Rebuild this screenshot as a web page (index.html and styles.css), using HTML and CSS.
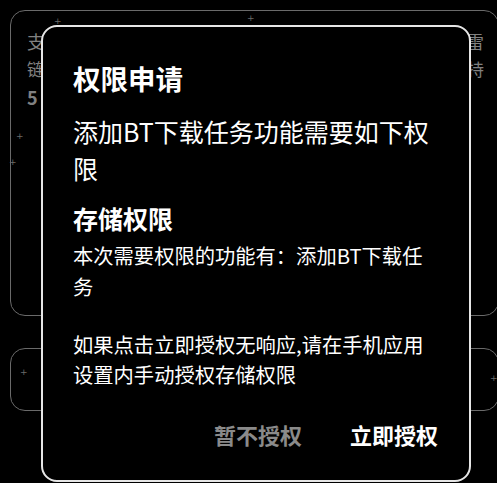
FILE: index.html
```html
<!DOCTYPE html>
<html lang="zh-CN">
<head>
<meta charset="utf-8">
<title>权限申请</title>
<link rel="stylesheet" href="styles.css">
</head>
<body>
<div class="page">
  <div class="card card-main">
    <div class="row row-1"><span>支</span><span>雷</span></div>
    <div class="row row-2"><span>链</span><span>持</span></div>
    <div class="row row-3"><span class="num">5</span></div>
  </div>
  <div class="card card-second"></div>

  <span class="spark s1">+</span>
  <span class="spark s2">+</span>
  <span class="spark s3">+</span>
  <span class="spark s4">+</span>
  <span class="spark s5">+</span>
  <span class="spark s6">+</span>
</div>

<div class="dialog">
  <h1 class="title">权限申请</h1>
  <p class="lead">添加BT下载任务功能需要如下权限</p>
  <h2 class="perm-name">存储权限</h2>
  <p class="perm-desc">本次需要权限的功能有：添加BT下载任务</p>
  <p class="hint">如果点击立即授权无响应,请在手机应用设置内手动授权存储权限</p>
  <div class="actions">
    <span class="btn btn-deny">暂不授权</span>
    <span class="btn btn-grant">立即授权</span>
  </div>
</div>
</body>
</html>
```

FILE: styles.css
```css
html, body {
  margin: 0;
  padding: 0;
  background: #000;
  width: 497px;
  height: 483px;
  overflow: hidden;
  font-family: "Noto Sans CJK SC", "Noto Sans", sans-serif;
}

.page {
  position: relative;
  padding: 10px 0 0 10px;
  width: 487px;
  height: 473px;
}

.card {
  box-sizing: border-box;
  width: 489px;
  border: 1.5px solid #6a6a6a;
  border-radius: 15px;
}

.card-main {
  height: 306px;
  padding: 16px 14px 0 16px;
  color: #808080;
}

.row {
  display: flex;
  justify-content: space-between;
  font-size: 18px;
  line-height: 28px;
}

.row-2 {
  font-size: 17px;
}

.num {
  font-weight: 700;
}

.card-second {
  margin-top: 32px;
  height: 63px;
}

.spark {
  position: absolute;
  color: #6a6a6a;
  font-size: 9px;
  line-height: 9px;
  font-family: "DejaVu Sans", sans-serif;
}
.s1 { left: 54px; top: 17px; }
.s2 { left: 16px; top: 132px; }
.s3 { left: 9px; top: 158px; }
.s4 { left: 20px; top: 368px; }
.s5 { left: 490px; top: 374px; }
.s6 { left: 247px; top: 14px; }

.dialog {
  position: absolute;
  left: 41px;
  top: 25px;
  box-sizing: border-box;
  width: 430px;
  height: 457px;
  background: #000;
  border: 2px solid #e6e6e6;
  border-radius: 16px;
  padding: 31px 31px 0 30px;
  color: #fff;
}

.title {
  margin: 0;
  font-size: 27.5px;
  line-height: 40px;
  font-weight: 700;
}

.lead {
  margin: 15px 0 0;
  font-size: 25px;
  line-height: 37px;
}

.perm-name {
  margin: 14px 0 0;
  font-size: 25px;
  line-height: 34px;
  font-weight: 700;
}

.perm-desc {
  margin: 5px 0 0;
  font-size: 20.3px;
  line-height: 31px;
}

.hint {
  margin: 27px 0 0;
  font-size: 20.3px;
  line-height: 30px;
}

.actions {
  margin-top: 30px;
  display: flex;
  justify-content: flex-end;
  gap: 48px;
  padding-right: 0;
}

.btn {
  font-size: 22px;
  line-height: 30px;
  font-weight: 700;
}

.btn-deny {
  color: #8a8a8a;
}

.btn-grant {
  color: #fff;
}
```
